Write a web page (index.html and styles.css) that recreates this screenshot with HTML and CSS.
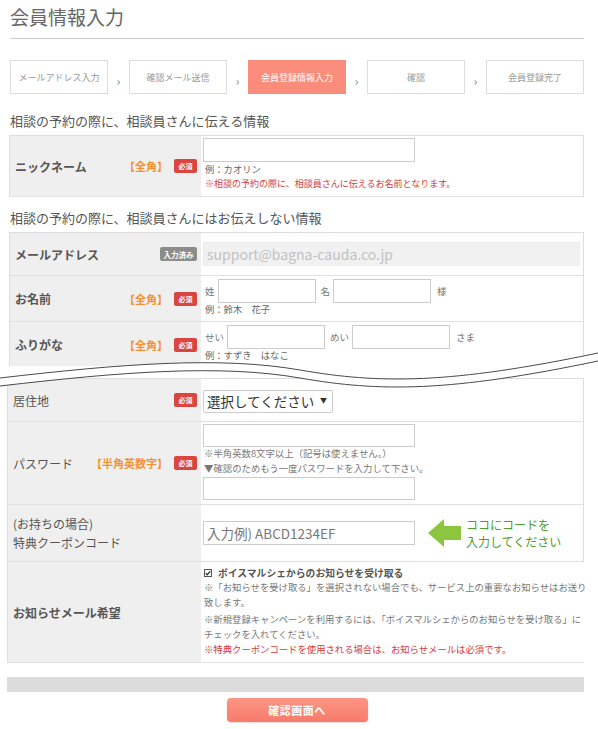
FILE: index.html
```html
<!DOCTYPE html>
<html lang="ja">
<head>
<meta charset="utf-8">
<title>会員情報入力</title>
<link rel="stylesheet" href="styles.css">
</head>
<body>
<div class="page">
  <h1 class="title">会員情報入力</h1>
  <ol class="steps">
    <li class="step">メールアドレス入力</li>
    <li class="sep">›</li>
    <li class="step">確認メール送信</li>
    <li class="sep">›</li>
    <li class="step active">会員登録情報入力</li>
    <li class="sep">›</li>
    <li class="step">確認</li>
    <li class="sep">›</li>
    <li class="step">会員登録完了</li>
  </ol>

  <h2 class="sec">相談の予約の際に、相談員さんに伝える情報</h2>
  <div class="form">
    <div class="row row-nick">
      <div class="lab"><span class="name">ニックネーム</span><span class="tag">【全角】</span><span class="req">必須</span></div>
      <div class="val val-nick">
        <input class="in in-wide" type="text">
        <p class="ex">例：カオリン</p>
        <p class="warn">※相談の予約の際に、相談員さんに伝えるお名前となります。</p>
      </div>
    </div>
  </div>

  <h2 class="sec sec2">相談の予約の際に、相談員さんにはお伝えしない情報</h2>
  <div class="form clipped">
    <div class="row row-mail">
      <div class="lab"><span class="name">メールアドレス</span><span class="done">入力済み</span></div>
      <div class="val val-mail">
        <div class="disabled">support@bagna-cauda.co.jp</div>
      </div>
    </div>
    <div class="row row-name">
      <div class="lab"><span class="name">お名前</span><span class="tag">【全角】</span><span class="req">必須</span></div>
      <div class="val val-name">
        <div class="pair">
          <span class="k">姓</span><input class="in in-s" type="text">
          <span class="k k2">名</span><input class="in in-s" type="text">
          <span class="k k3">様</span>
        </div>
        <p class="ex ex-tight">例：鈴木　花子</p>
      </div>
    </div>
    <div class="row row-kana">
      <div class="lab"><span class="name">ふりがな</span><span class="tag">【全角】</span><span class="req">必須</span></div>
      <div class="val val-name">
        <div class="pair">
          <span class="k">せい</span><input class="in in-s" type="text">
          <span class="k k2">めい</span><input class="in in-s" type="text">
          <span class="k k3">さま</span>
        </div>
        <p class="ex ex-tight">例：すずき　はなこ</p>
      </div>
    </div>
  </div>

  <div class="form form-low">
    <div class="row row-pref">
      <div class="lab lab-low"><span class="name name-low">居住地</span><span class="req">必須</span></div>
      <div class="val val-pref">
        <span class="select"><select class="sel"><option>選択してください</option></select></span>
      </div>
    </div>
    <div class="row row-pass">
      <div class="lab lab-low"><span class="name name-low">パスワード</span><span class="tag">【半角英数字】</span><span class="req">必須</span></div>
      <div class="val val-pass">
        <input class="in in-wide in-23" type="password">
        <p class="note">※半角英数8文字以上（記号は使えません。）</p>
        <p class="note note2">▼確認のためもう一度パスワードを入力して下さい。</p>
        <input class="in in-wide in-23 in-2" type="password">
      </div>
    </div>
    <div class="row row-coupon">
      <div class="lab lab-low"><span class="name name-low name-2l">(お持ちの場合)<br>特典クーポンコード</span></div>
      <div class="val val-coupon">
        <input class="in in-wide in-coupon" type="text" placeholder="入力例) ABCD1234EF">
        <svg class="arrow" width="33" height="28" viewBox="0 0 33 28" aria-hidden="true">
          <polygon points="0,14 16,0 16,7 33,7 33,21 16,21 16,28" fill="#8cc63f"/>
        </svg>
        <p class="hint"><span class="hl">ココにコードを</span><span class="hl">入力してください</span></p>
      </div>
    </div>
    <div class="row row-news">
      <div class="lab lab-low"><span class="name name-low name-bold">お知らせメール希望</span></div>
      <div class="val val-news">
        <p class="cb-line"><span class="cb"><svg width="8" height="8" viewBox="0 0 8 8" aria-hidden="true"><rect x="0.5" y="0.5" width="7" height="7" fill="#fff" stroke="#555"/><path d="M1.8 4.2 L3.3 5.7 L6.3 2.2" fill="none" stroke="#333" stroke-width="1.3"/></svg></span>ボイスマルシェからのお知らせを受け取る</p>
        <p class="news">※「お知らせを受け取る」を選択されない場合でも、サービス上の重要なお知らせはお送り<br>致します。</p>
        <p class="news news2">※新規登録キャンペーンを利用するには、「ボイスマルシェからのお知らせを受け取る」に<br>チェックを入れてください。</p>
        <p class="news news-red">※特典クーポンコードを使用される場合は、お知らせメールは必須です。</p>
      </div>
    </div>
  </div>

  <div class="bar"></div>
  <div class="btn-wrap"><button class="btn" type="button">確認画面へ</button></div>

  <svg class="cut" width="598" height="60" viewBox="0 340 598 60" aria-hidden="true">
    <path d="M0 374 C120 360 220 352 300 366 C380 380 450 380 598 349 L598 357 C450 388 380 388 300 374 C220 360 120 368 0 382 Z" fill="#fff"/>
    <path d="M0 374 C120 360 220 352 300 366 C380 380 450 380 598 349" fill="none" stroke="#4a4a4a" stroke-width="1"/>
    <path d="M0 382 C120 368 220 360 300 374 C380 388 450 388 598 357" fill="none" stroke="#4a4a4a" stroke-width="1"/>
  </svg>
</div>
</body>
</html>
```

FILE: styles.css
```css
* { box-sizing: border-box; }
body {
  margin: 0;
  background: #fff;
  font-family: "Noto Sans CJK JP", "Noto Sans", sans-serif;
  color: #555;
}
p { margin: 0; }
.page {
  position: relative;
  width: 598px;
  padding: 0 14px 8px 10px;
}
.title {
  margin: 4px 0 0;
  font-size: 19px;
  font-weight: normal;
  line-height: 26px;
  color: #666;
  padding-bottom: 8px;
  border-bottom: 1px solid #ccc;
}
.steps {
  list-style: none;
  margin: 21px 0 0;
  padding: 0;
  display: flex;
  height: 34px;
}
.step {
  flex: 1;
  border: 1px solid #ddd;
  display: flex;
  align-items: center;
  justify-content: center;
  font-size: 9px;
  color: #999;
}
.step.active {
  background: #fa8c7b;
  border-color: #fa8c7b;
  color: #fff;
}
.sep {
  width: 21px;
  display: flex;
  align-items: center;
  justify-content: center;
  font-size: 12px;
  color: #888;
  padding-top: 6px;
}
.sec {
  margin: 18px 0 5px;
  font-size: 13px;
  font-weight: normal;
  line-height: 18px;
  color: #555;
}
.sec2 { margin-top: 12px; }

.form {
  border: 1px solid #ddd;
  border-bottom: none;
  margin-left: -1px;
}
.clipped {
  height: 134px;
  overflow: hidden;
}
.form-low {
  margin-top: 12px;
  margin-left: -3px;
}
.row {
  display: grid;
  grid-template-columns: 191px 1fr;
  border-bottom: 1px solid #e0e0e0;
}
.form-low .row { grid-template-columns: 193px 1fr; }
.lab {
  background: #efefef;
  display: flex;
  align-items: center;
  padding: 0 4px 0 5px;
}
.lab-low { padding-left: 5px; }
.name {
  flex: 1;
  font-size: 12px;
  font-weight: bold;
  color: #555;
}
.name-low { font-weight: normal; color: #555; }
.name-2l { line-height: 19px; }
.name-bold { font-weight: bold; }
.tag {
  font-size: 11px;
  font-weight: bold;
  color: #f5922f;
  margin-right: 6px;
}
.req, .done {
  display: inline-flex;
  align-items: center;
  justify-content: center;
  height: 14px;
  border-radius: 2px;
  color: #fff;
  font-size: 7px;
  font-weight: bold;
}
.req { width: 23px; background: #d9463f; }
.done { width: 37px; background: #8c8c8c; font-size: 7.5px; margin-left: 6px; }

.val { background: #fff; }
.in {
  display: block;
  height: 24px;
  border: 1px solid #ccc;
  border-radius: 0;
  background: #fff;
  padding: 0 5px;
  margin: 0;
  font-family: inherit;
}
.in-wide { width: 212px; }
.in-23 { height: 23px; }
.in-s { width: 98px; }

.val-nick { padding: 2px 0 5px 2px; }
.ex {
  font-size: 9.3px;
  line-height: 15px;
  color: #666;
  padding-left: 2px;
}
.warn {
  font-size: 9px;
  line-height: 14px;
  color: #d43d3d;
  padding-left: 2px;
}

.val-mail { padding: 9px 3px 8px 2px; height: 42px; }
.disabled {
  height: 24px;
  background: #f1f1f1;
  border: 1px solid #ececec;
  font-size: 14px;
  line-height: 22px;
  color: #c2c2c2;
  padding-left: 3px;
}

.val-name { padding: 3px 0 5px 4px; height: 45px; }
.pair { display: flex; align-items: center; height: 24px; }
.k { font-size: 9.5px; color: #777; margin-right: 3px; }
.k2 { margin-left: 5px; }
.k3 { margin-left: 6px; }
.ex-tight { line-height: 13px; padding-left: 0; }

.val-pref { padding: 9px 0 10px 2px; height: 42px; }
.select {
  position: relative;
  display: inline-block;
}
.select::after {
  content: "▼";
  position: absolute;
  right: 6px;
  top: 7px;
  font-size: 7px;
  color: #333;
  pointer-events: none;
}
.sel {
  appearance: none;
  -webkit-appearance: none;
  width: 130px;
  height: 23px;
  border: 1px solid #ccc;
  border-radius: 2px;
  background: #fff;
  font-family: inherit;
  font-size: 13.5px;
  color: #333;
  padding: 0 0 0 3px;
  margin: 0;
}

.val-pass { padding: 2px 0 4px 2px; height: 82px; }
.note {
  font-size: 9.4px;
  line-height: 12px;
  color: #777;
  padding-left: 1px;
}
.note2 { margin-top: 3px; }
.in-2 { margin-top: 3px; }

.val-coupon {
  display: flex;
  align-items: center;
  padding-left: 2px;
  height: 56px;
}
.in-coupon {
  font-size: 13.5px;
  color: #666;
  padding-left: 3px;
}
.in-coupon::placeholder { color: #777; }
.arrow { margin-left: 13px; flex: none; }
.hint {
  margin-left: 5px;
  display: flex;
  flex-direction: column;
  gap: 0;
}
.hl {
  display: block;
  font-size: 12px;
  line-height: 17px;
  color: #4c9e2e;
}

.val-news { padding: 4px 0 5px 3px; height: 100px; }
.cb-line {
  display: flex;
  align-items: center;
  font-size: 9.8px;
  font-weight: bold;
  line-height: 14px;
  color: #555;
}
.cb { display: inline-flex; margin-right: 6px; }
.news {
  font-size: 9.35px;
  line-height: 15px;
  color: #777;
  white-space: nowrap;
}
.news2 { margin-top: 2px; }
.news-red { color: #d43d3d; }

.bar {
  margin: 14px 0 0 -3px;
  height: 15px;
  background: #dcdcdc;
}
.btn-wrap {
  display: flex;
  justify-content: center;
  margin-top: 6px;
  padding-left: 0;
}
.btn {
  width: 141px;
  height: 24px;
  border: none;
  border-radius: 4px;
  background: linear-gradient(#fc9585, #f77b6b);
  box-shadow: 0 1px 2px rgba(0,0,0,0.15);
  color: #fff;
  font-family: inherit;
  font-size: 11px;
  font-weight: bold;
  letter-spacing: 0.5px;
}
.cut {
  position: absolute;
  left: 0;
  top: 340px;
}
```
